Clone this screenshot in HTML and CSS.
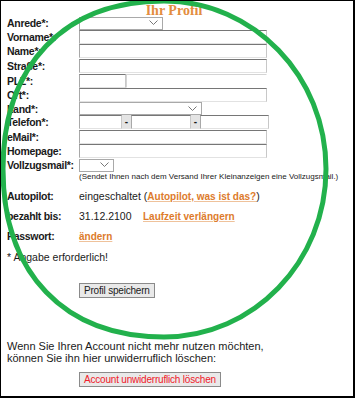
FILE: index.html
```html
<!DOCTYPE html>
<html lang="de">
<head>
    <meta charset="UTF-8">
    <title>Ihr Profil</title>
    <link rel="stylesheet" href="styles.css">
</head>
<body>
<div class="page">
    <h1 class="title">Ihr Profil</h1>

    <div class="form">
        <div class="label">Anrede*:</div>
        <div class="field"><div class="select sel-anrede"><svg width="9" height="6" viewBox="0 0 9 6"><path d="M0.5 0.5 L4.5 4.5 L8.5 0.5" fill="none" stroke="#777" stroke-width="1"/></svg></div></div>

        <div class="label">Vorname*:</div>
        <div class="field"><div class="input w-full"></div></div>

        <div class="label">Name*:</div>
        <div class="field"><div class="input w-full"></div></div>

        <div class="label">Straße*:</div>
        <div class="field"><div class="input w-full"></div></div>

        <div class="label">PLZ*:</div>
        <div class="field"><div class="input w-plz"></div><div class="input ghost"></div></div>

        <div class="label">Ort*:</div>
        <div class="field"><div class="input w-full"></div></div>

        <div class="label">Land*:</div>
        <div class="field"><div class="select sel-land"><svg width="9" height="6" viewBox="0 0 9 6"><path d="M0.5 0.5 L4.5 4.5 L8.5 0.5" fill="none" stroke="#777" stroke-width="1"/></svg></div></div>

        <div class="label">Telefon*:</div>
        <div class="field">
            <div class="input w-tel1"></div><div class="dash">-</div><div class="input w-tel2"></div><div class="dash">-</div><div class="input w-tel3"></div>
        </div>

        <div class="label">eMail*:</div>
        <div class="field"><div class="input w-full"></div></div>

        <div class="label">Homepage:</div>
        <div class="field"><div class="input w-full"></div></div>

        <div class="label">Vollzugsmail*:</div>
        <div class="field"><div class="select sel-vz"><svg width="9" height="6" viewBox="0 0 9 6"><path d="M0.5 0.5 L4.5 4.5 L8.5 0.5" fill="none" stroke="#777" stroke-width="1"/></svg></div></div>

        <div></div>
        <div class="hint">(Sendet Ihnen nach dem Versand Ihrer Kleinanzeigen eine Vollzugsmail.)</div>
    </div>

    <div class="info">
        <div class="label">Autopilot:</div>
        <div>eingeschaltet (<a href="#" class="link">Autopilot, was ist das?</a>)</div>

        <div class="label">bezahlt bis:</div>
        <div><span class="date">31.12.2100</span><a href="#" class="link">Laufzeit verlängern</a></div>

        <div class="label">Passwort:</div>
        <div><a href="#" class="link">ändern</a></div>
    </div>

    <p class="required">* Angabe erforderlich!</p>

    <div class="btn-row"><button class="btn">Profil speichern</button></div>

    <p class="delete-text">Wenn Sie Ihren Account nicht mehr nutzen möchten,<br>können Sie ihn hier unwiderruflich löschen:</p>

    <div class="btn-row"><button class="btn btn-delete">Account unwiderruflich löschen</button></div>

    <!-- Markierung -->
    <svg class="circle" width="355" height="398" viewBox="0 0 355 398">
        <path d="M164 1 C253.5 1 326 76.2 326 169 C326 261.8 253.5 337 164 337 C64.2 337 3 273.2 3 169 C3 64.8 64.2 1 164 1 Z" fill="none" stroke="#22b14c" stroke-width="5"/>
    </svg>
</div>
</body>
</html>
```

FILE: styles.css
```css
body {
    margin: 0;
    font-family: "Liberation Sans", Arial, sans-serif;
    font-size: 11px;
    color: #1a1a1a;
    background: #fff;
}

.page {
    position: relative;
    width: 355px;
    height: 398px;
    box-sizing: border-box;
    border-style: solid;
    border-color: #000;
    border-width: 1px 2px 2px 1px;
    padding: 0 0 0 6px;
    overflow: hidden;
}

.title {
    margin: 0;
    height: 15px;
    text-align: center;
    font-family: "Liberation Serif", "Times New Roman", serif;
    font-size: 14px;
    line-height: 19px;
    color: #e38d40;
    padding-right: 12px;
}

.form {
    display: grid;
    grid-template-columns: 72px auto;
    grid-template-rows: 14px 14px 14px 15px 15px 14px 13px 14px 15px 14px 14px 10px;
    align-items: center;
}

.label {
    font-weight: bold;
    font-size: 10.5px;
    letter-spacing: -0.3px;
    white-space: nowrap;
}

.field {
    display: flex;
    align-items: center;
}

.input {
    height: 14px;
    box-sizing: border-box;
    border: 1px solid;
    border-color: #767676 #c8c8c8 #e2e2e2 #a8a8a8;
    background: #fff;
}

.w-full { width: 188px; }
.w-plz { width: 47px; }
.w-tel1 { width: 43px; }
.w-tel2 { width: 60px; }
.w-tel3 { width: 69px; }

.ghost {
    width: 141px;
    border-color: #d4d4d4 #fff #fff #d4d4d4;
}

.dash {
    width: 9px;
    height: 14px;
    background: #e4e4e4;
    text-align: center;
    line-height: 13px;
    font-weight: bold;
    font-size: 10px;
}

.select {
    height: 13px;
    box-sizing: border-box;
    border: 1px solid #a9a9a9;
    background: #fff;
    display: flex;
    align-items: center;
    justify-content: flex-end;
    padding-right: 4px;
}

.sel-anrede { width: 84px; }
.sel-land { width: 123px; }
.sel-vz { width: 35px; }

.hint {
    font-size: 8px;
    line-height: 10px;
    white-space: nowrap;
}

.info {
    display: grid;
    grid-template-columns: 72px auto;
    grid-auto-rows: 20px;
    align-items: center;
    margin-top: 4px;
    font-size: 10.5px;
}

.link {
    color: #dd7b2c;
    font-weight: bold;
    font-size: 10px;
    text-decoration: underline;
    text-decoration-color: #efc29b;
}

.date {
    display: inline-block;
    width: 64px;
}

.required {
    margin: 4px 0 0;
    height: 14px;
    line-height: 14px;
    font-size: 10.5px;
}

.btn-row {
    padding-left: 72px;
    height: 15px;
}

.btn {
    font-family: "Liberation Sans", Arial, sans-serif;
    font-size: 10px;
    letter-spacing: -0.2px;
    height: 15px;
    padding: 0 4px;
    line-height: 13px;
    border: 1px solid #8a8a8a;
    background: #e9e9e9;
    color: #1a1a1a;
    vertical-align: top;
}

.required + .btn-row {
    margin-top: 19px;
}

.delete-text {
    margin: 42px 0 0;
    line-height: 12px;
}

.delete-text + .btn-row {
    margin-top: 8px;
}

.btn-delete {
    color: #f0202a;
}

.circle {
    position: absolute;
    top: -1px;
    left: -1px;
    pointer-events: none;
}
```
